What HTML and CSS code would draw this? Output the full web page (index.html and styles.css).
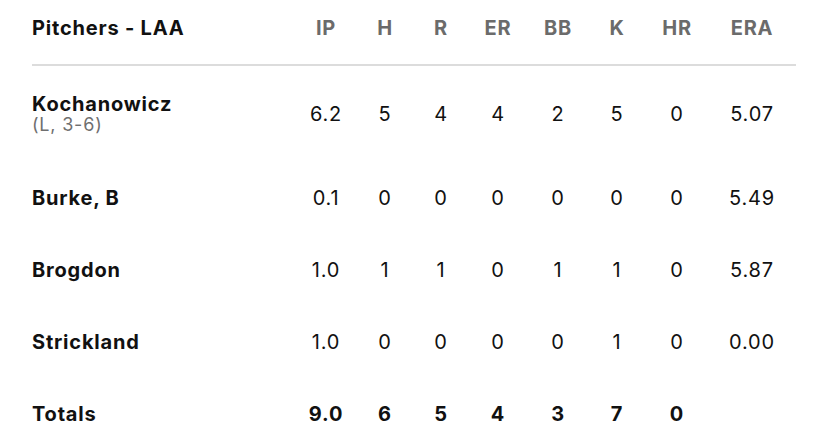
FILE: index.html
```html
<!DOCTYPE html>
<html lang="en">
<head>
    <meta charset="UTF-8">
    <meta name="viewport" content="width=device-width, initial-scale=1.0">
    <title>Pitchers - LAA</title>
    <link rel="stylesheet" href="styles.css">
</head>
<body>
    <div class="box-score">
        <div class="row head-row">
            <div class="name">Pitchers - LAA</div>
            <div>IP</div><div>H</div><div>R</div><div>ER</div><div>BB</div><div>K</div><div>HR</div><div>ERA</div>
        </div>
        <div class="row tall">
            <div class="name">Kochanowicz<span class="note">(L, 3-6)</span></div>
            <div>6.2</div><div>5</div><div>4</div><div>4</div><div>2</div><div>5</div><div>0</div><div>5.07</div>
        </div>
        <div class="row">
            <div class="name">Burke, B</div>
            <div>0.1</div><div>0</div><div>0</div><div>0</div><div>0</div><div>0</div><div>0</div><div>5.49</div>
        </div>
        <div class="row">
            <div class="name">Brogdon</div>
            <div>1.0</div><div>1</div><div>1</div><div>0</div><div>1</div><div>1</div><div>0</div><div>5.87</div>
        </div>
        <div class="row">
            <div class="name">Strickland</div>
            <div>1.0</div><div>0</div><div>0</div><div>0</div><div>0</div><div>1</div><div>0</div><div>0.00</div>
        </div>
        <div class="row totals">
            <div class="name">Totals</div>
            <div>9.0</div><div>6</div><div>5</div><div>4</div><div>3</div><div>7</div><div>0</div><div></div>
        </div>
    </div>
</body>
</html>
```

FILE: styles.css
```css
body {
    margin: 0;
    background: #fff;
    font-family: Inter, "Open Sans", sans-serif;
    color: #111;
}
.box-score {
    width: 764px;
    margin-left: 32px;
}
.row {
    display: grid;
    grid-template-columns: 264px 60px 58px 54px 60px 60px 58px 62px 88px;
    align-items: center;
    height: 72px;
    font-size: 20px;
    letter-spacing: 0.8px;
    text-align: center;
}
.row .name {
    text-align: left;
    font-weight: 700;
    line-height: 22px;
}
.head-row {
    height: 56px;
    padding-bottom: 8px;
    border-bottom: 2px solid #dcdcdc;
    font-weight: 700;
    color: #6b6b6b;
}
.head-row .name {
    color: #111;
}
.tall {
    height: 96px;
}
.note {
    display: block;
    font-weight: 400;
    color: #6f6f6f;
    font-size: 18px;
    line-height: 20px;
}
.totals {
    font-weight: 700;
}
```
